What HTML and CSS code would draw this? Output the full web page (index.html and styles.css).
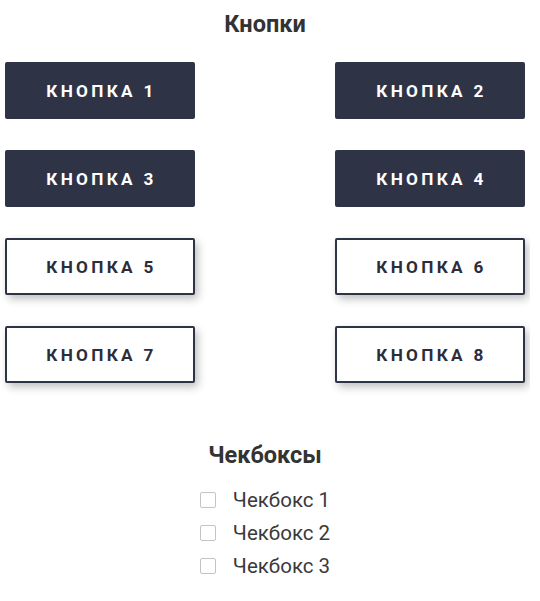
FILE: index.html
```html
<!DOCTYPE html>
<html lang="ru">
<head>
<meta charset="utf-8">
<link rel="stylesheet" href="styles.css">
</head>
<body>
<section class="section">
  <h2 class="title">Кнопки</h2>
  <div class="buttons">
    <button class="btn btn-solid">Кнопка 1</button>
    <button class="btn btn-solid">Кнопка 2</button>
    <button class="btn btn-solid">Кнопка 3</button>
    <button class="btn btn-solid">Кнопка 4</button>
    <button class="btn btn-outline">Кнопка 5</button>
    <button class="btn btn-outline">Кнопка 6</button>
    <button class="btn btn-outline">Кнопка 7</button>
    <button class="btn btn-outline">Кнопка 8</button>
  </div>
</section>
<section class="section section-checks">
  <h2 class="title">Чекбоксы</h2>
  <div class="checks">
    <label class="check"><span class="box"></span>Чекбокс 1</label>
    <label class="check"><span class="box"></span>Чекбокс 2</label>
    <label class="check"><span class="box"></span>Чекбокс 3</label>
  </div>
</section>
</body>
</html>
```
FILE: styles.css
```css
html, body {
  margin: 0;
  padding: 0;
  background: #fff;
}
body {
  font-family: Roboto, "Liberation Sans", sans-serif;
  color: #333;
  width: 530px;
}
.section {
  display: flex;
  flex-direction: column;
  align-items: center;
}
.title {
  margin: 0;
  font-size: 23.5px;
  font-weight: 700;
  line-height: 28px;
  color: #333;
  padding-top: 10px;
  text-align: center;
}
.buttons {
  display: grid;
  grid-template-columns: 190px 190px;
  justify-content: space-between;
  row-gap: 31px;
  width: 520px;
  margin-top: 24px;
}
.btn {
  height: 57px;
  font-family: Roboto, "Liberation Sans", sans-serif;
  font-size: 17.2px;
  font-weight: 700;
  letter-spacing: 3.3px;
  text-transform: uppercase;
  border-radius: 2px;
  padding: 0 0 0 3px;
  cursor: pointer;
}
.btn-solid {
  background: #2f3346;
  color: #fff;
  border: none;
}
.btn-outline {
  background: #fff;
  color: #2b2e3a;
  border: 2px solid #2f3346;
  box-shadow: 3px 4px 8px rgba(0, 0, 0, 0.25);
}
.section-checks {
  margin-top: 48px;
}
.checks {
  display: flex;
  flex-direction: column;
  gap: 9px;
  margin-top: 19px;
}
.check {
  display: flex;
  align-items: center;
  font-size: 20.5px;
  line-height: 24px;
  color: #3a3a3a;
}
.box {
  width: 14px;
  height: 14px;
  border: 1px solid #c4c4c4;
  border-radius: 2px;
  margin-right: 17px;
  box-sizing: content-box;
}
```
